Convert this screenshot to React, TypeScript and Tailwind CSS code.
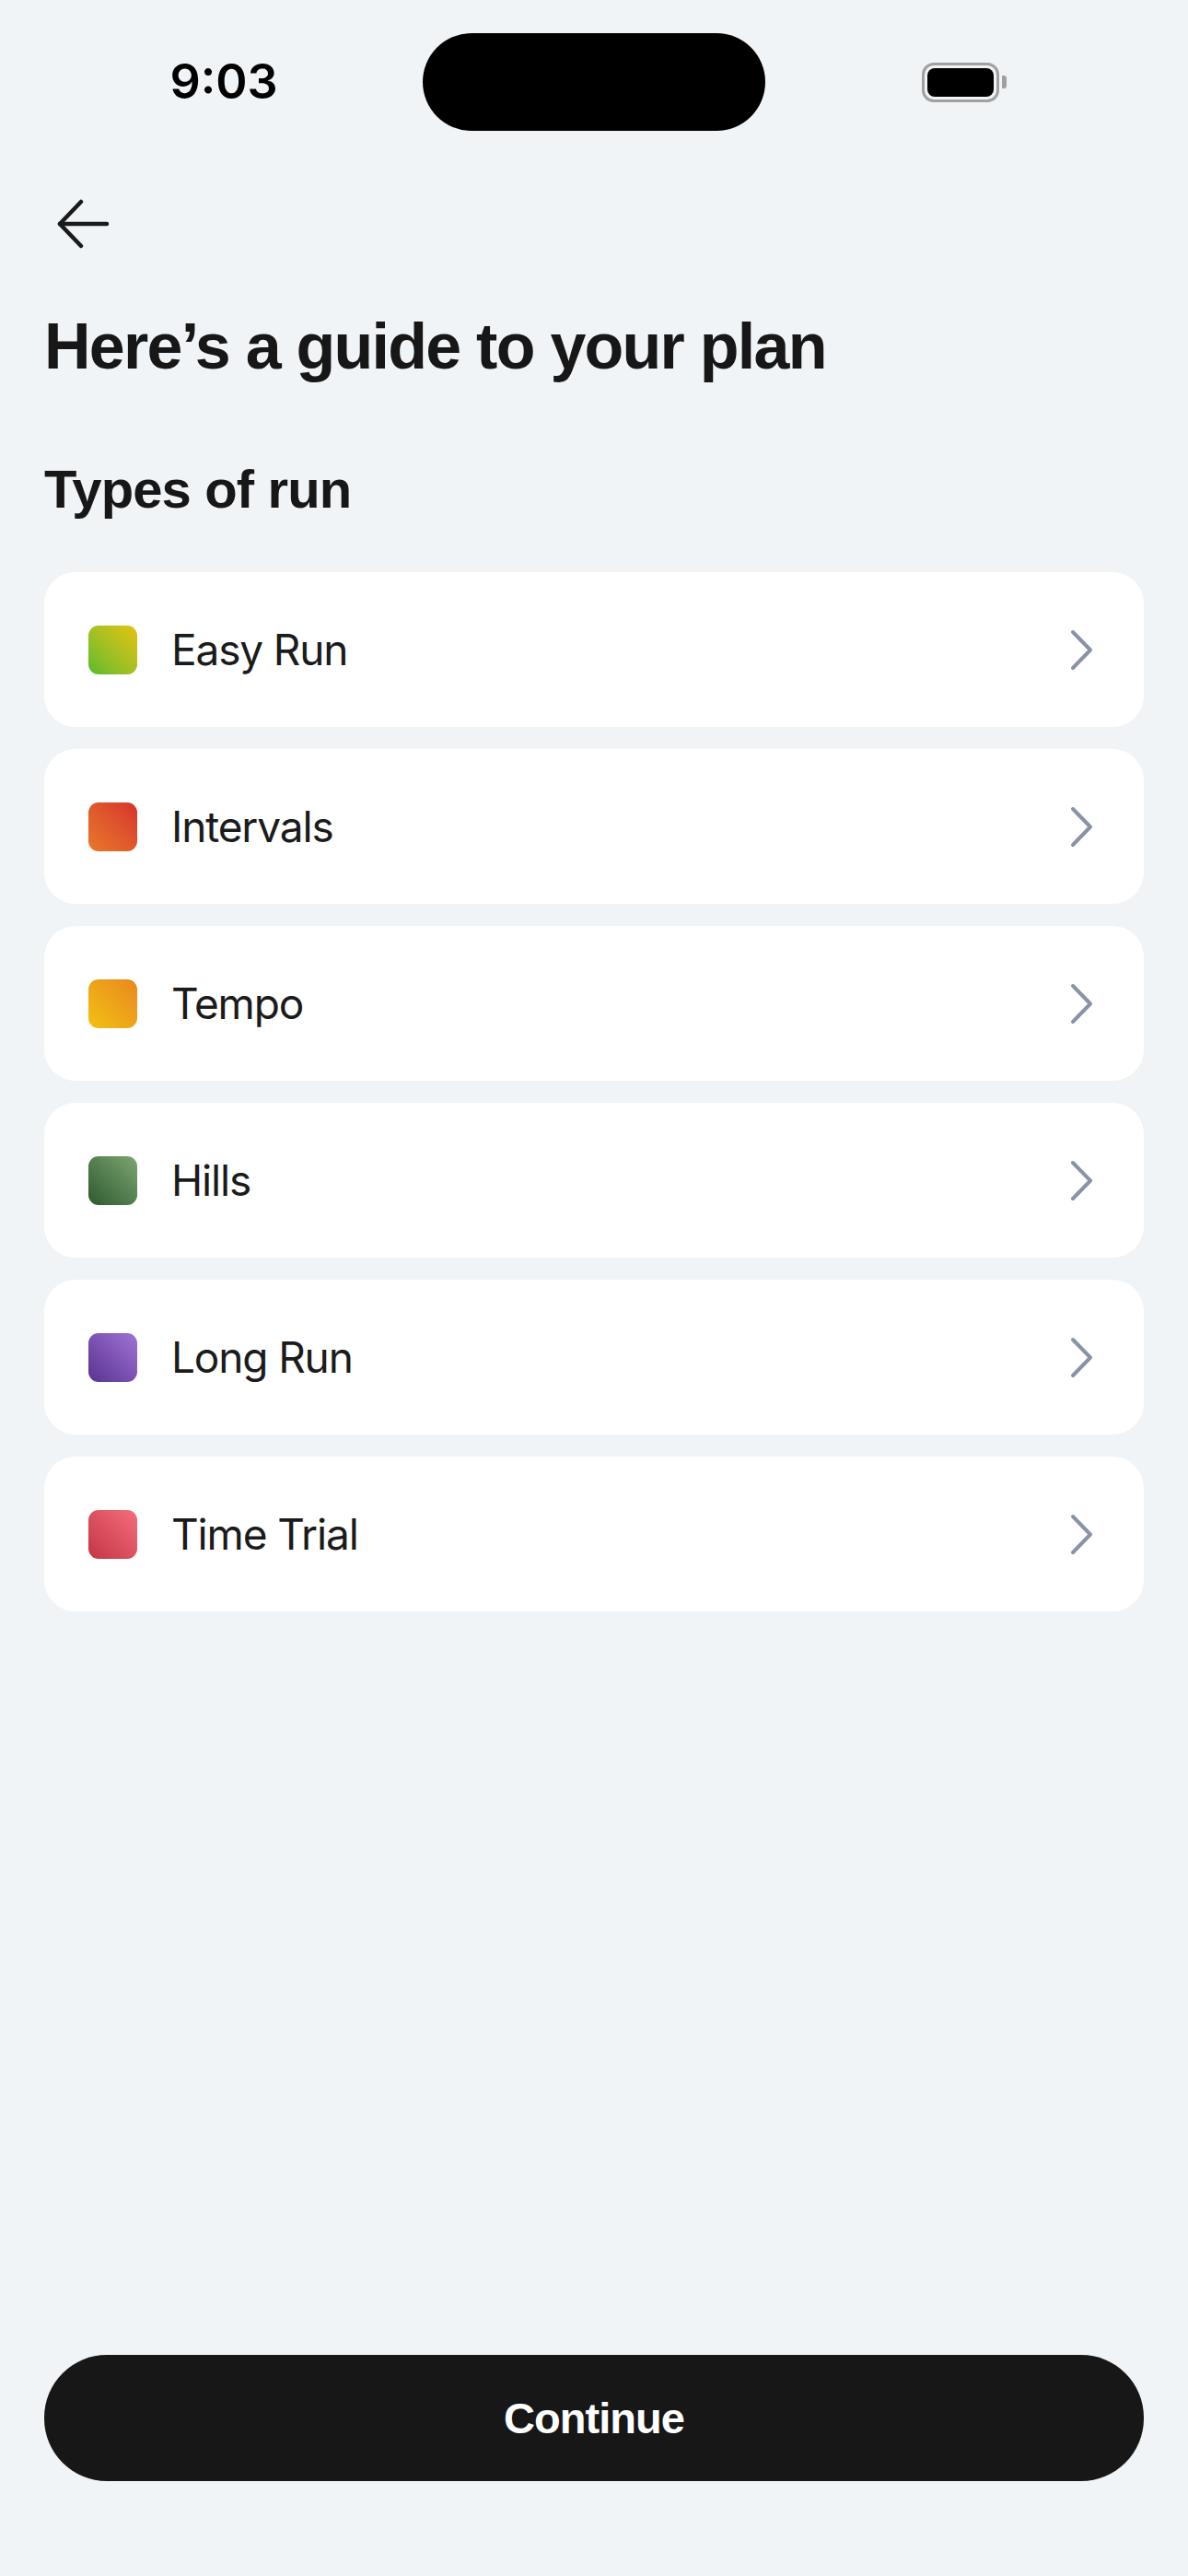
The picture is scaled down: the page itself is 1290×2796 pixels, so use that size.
import React from "react";

const runs = [
  { name: "Easy Run", cls: "bg-linear-to-tr from-[#55bb2c] to-[#e3c30e]" },
  { name: "Intervals", cls: "bg-linear-to-tr from-[#e8782a] to-[#d6302c]" },
  { name: "Tempo", cls: "bg-linear-to-tr from-[#f2c10f] to-[#e8871f]" },
  { name: "Hills", cls: "bg-linear-to-tr from-[#2e5a30] to-[#7ea673]" },
  { name: "Long Run", cls: "bg-linear-to-tr from-[#5a3290] to-[#a074d6]" },
  { name: "Time Trial", cls: "bg-linear-to-tr from-[#c33447] to-[#f56d7b]" },
];

function Chevron() {
  return (
    <svg width="27" height="45" viewBox="0 0 27 45" fill="none">
      <path d="M4 3 L23 22.5 L4 42" stroke="#8a92a6" strokeWidth="4" strokeLinecap="round" strokeLinejoin="round" />
    </svg>
  );
}

export default function App() {
  return (
    <div className="min-h-[2796px] w-[1290px] bg-[#f0f4f7] flex flex-col">
      {/* status bar */}
      <div className="h-[178px] flex items-start pt-[36px]">
        <div className="w-[459px] h-[106px] flex items-center justify-center pl-[27px]">
          <span className="text-[52px] font-semibold text-black leading-none" style={{ fontFamily: "Inter, sans-serif" }}>
            9:03
          </span>
        </div>
        <div className="w-[372px] h-[106px] rounded-full bg-black" />
        <div className="flex-1 h-[106px] flex items-center justify-center pr-[28px]">
          <div className="flex items-center gap-[3px]">
            <div className="w-[84px] h-[43px] rounded-[13px] border-[3px] border-[#a0a0a0] p-[3px]">
              <div className="w-full h-full rounded-[8px] bg-black" />
            </div>
            <div className="w-[5px] h-[14px] rounded-r-[3px] bg-[#a0a0a0]" />
          </div>
        </div>
      </div>

      <div className="px-12 flex flex-col">
        {/* back arrow */}
        <div className="h-[130px] flex items-center">
          <svg width="60" height="54" viewBox="0 0 60 54" fill="none" className="ml-[12px]">
            <path d="M5 27 H56" stroke="#1a1a1a" strokeWidth="4.5" strokeLinecap="round" />
            <path d="M28 3 L5 27 L28 51" stroke="#1a1a1a" strokeWidth="4.5" strokeLinecap="round" strokeLinejoin="round" />
          </svg>
        </div>

        <h1
          className="mt-[33px] text-[70px] font-bold leading-none tracking-[-0.025em] text-[#171717]"
          style={{ fontFamily: "'Liberation Sans', Arial, sans-serif" }}
        >
          Here’s a guide to your plan
        </h1>

        <h2
          className="mt-[91px] text-[58px] font-bold leading-none tracking-[-0.015em] text-[#171717]"
          style={{ fontFamily: "'Liberation Sans', Arial, sans-serif" }}
        >
          Types of run
        </h2>

        <div className="mt-[61px] flex flex-col gap-6">
          {runs.map((r) => (
            <div key={r.name} className="h-[168px] rounded-[34px] bg-white flex items-center pl-[48px] pr-[54px]">
              <div className={`w-[53px] h-[53px] rounded-[11px] ${r.cls}`} />
              <span
                className="ml-[37px] flex-1 text-[46px] leading-none tracking-[-0.025em] text-[#1b1b1b]"
                style={{ fontFamily: "Inter, sans-serif" }}
              >
                {r.name}
              </span>
              <Chevron />
            </div>
          ))}
        </div>
      </div>

      <div className="mt-auto px-12 pb-[103px]">
        <button className="w-full h-[137px] rounded-[68px] bg-[#171717] flex items-center justify-center">
          <span
            className="text-[47px] font-bold leading-none tracking-[-0.02em] text-white"
            style={{ fontFamily: "'Liberation Sans', Arial, sans-serif" }}
          >
            Continue
          </span>
        </button>
      </div>
    </div>
  );
}
